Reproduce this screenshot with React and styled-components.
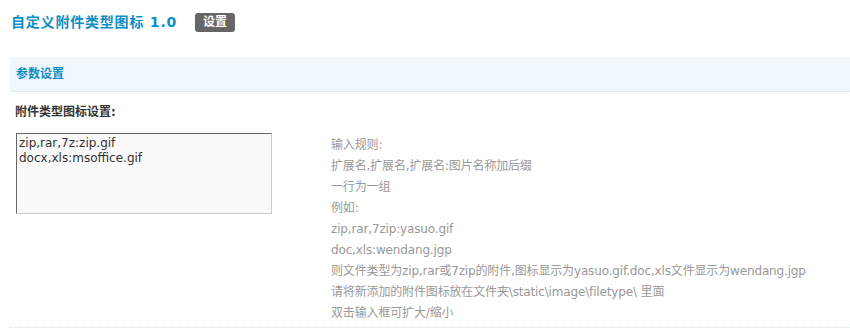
import React from "react";
import styled, { createGlobalStyle } from "styled-components";

const FONT = `"DejaVu Sans", "Noto Sans CJK SC", sans-serif`;

const Global = createGlobalStyle`
  html, body { margin: 0; padding: 0; background: #fff; }
  body {
    font: 12px/1.5 ${FONT};
    color: #333;
  }
`;

const Page = styled.div`
  width: 840px;
  margin-left: 10px;
`;

const TitleBar = styled.div`
  display: flex;
  align-items: center;
  height: 44px;
  margin-bottom: 13px;
  padding-left: 1px;
`;

const Title = styled.h3`
  margin: 0;
  font-size: 14px;
  font-weight: 700;
  color: #0b8ec4;
  letter-spacing: 0.8px;
  line-height: 20px;
`;

const Badge = styled.span`
  margin-left: 18px;
  display: inline-block;
  height: 19px;
  line-height: 19px;
  padding: 0 8px;
  background: #666;
  color: #fff;
  font-weight: 700;
  font-size: 12px;
  border-radius: 3px;
`;

const Partition = styled.div`
  height: 34px;
  line-height: 34px;
  padding-left: 6px;
  background: #f1f8fd;
  border-bottom: 1px dotted #cfe0ea;
  color: #0b8ec4;
  font-weight: 700;
`;

const LabelRow = styled.div`
  height: 34px;
  line-height: 34px;
  padding: 3px 0 0 5px;
  font-weight: 700;
  color: #333;
`;

const Row = styled.div`
  display: grid;
  grid-template-columns: 321px 1fr;
  padding: 4px 0 3px;
  border-bottom: 1px dotted #d6e3ea;
`;

const Cell = styled.div`
  padding-left: ${(p) => p.$pad || 0}px;
`;

const Area = styled.textarea`
  box-sizing: border-box;
  display: block;
  width: 256px;
  height: 81px;
  padding: 2px;
  margin: 0;
  border: 1px solid;
  border-color: #666 #ccc #ccc #666;
  background: #f9f9f9;
  font: 12px/15px ${FONT};
  color: #333;
  resize: none;
  outline: none;
`;

const Tips = styled.div`
  color: #999;
  line-height: 21px;
  padding-top: 2px;
  letter-spacing: -0.15px;
`;

const tips = [
  "输入规则:",
  "扩展名,扩展名,扩展名:图片名称加后缀",
  "一行为一组",
  "例如:",
  "zip,rar,7zip:yasuo.gif",
  "doc,xls:wendang.jgp",
  "则文件类型为zip,rar或7zip的附件,图标显示为yasuo.gif.doc,xls文件显示为wendang.jgp",
  "请将新添加的附件图标放在文件夹\\static\\image\\filetype\\ 里面",
  "双击输入框可扩大/缩小",
];

export default function App() {
  return (
    <>
      <Global />
      <Page>
        <TitleBar>
          <Title>自定义附件类型图标 1.0</Title>
          <Badge>设置</Badge>
        </TitleBar>
        <Partition>参数设置</Partition>
        <LabelRow>附件类型图标设置:</LabelRow>
        <Row>
          <Cell $pad={6}>
            <Area defaultValue={"zip,rar,7z:zip.gif\ndocx,xls:msoffice.gif"} />
          </Cell>
          <Cell>
            <Tips>
              {tips.map((t, i) => (
                <div key={i}>{t}</div>
              ))}
            </Tips>
          </Cell>
        </Row>
      </Page>
    </>
  );
}
